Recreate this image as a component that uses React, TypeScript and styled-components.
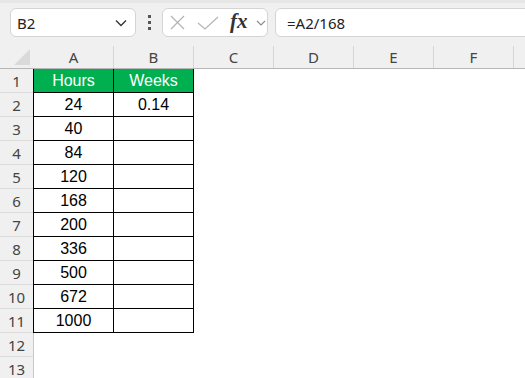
import styled, { createGlobalStyle } from "styled-components";

const GlobalStyle = createGlobalStyle`
  html, body {
    margin: 0;
    padding: 0;
    background: #ffffff;
    overflow: hidden;
  }
`;

const COLUMNS = ["A", "B", "C", "D", "E", "F", ""];
const HOURS = ["24", "40", "84", "120", "168", "200", "336", "500", "672", "1000"];
const ROW_COUNT = 13;

const App = () => {
  return (
    <Page>
      <GlobalStyle />
      <Toolbar>
        <NameBox>
          <span>B2</span>
          <svg width="12" height="8" viewBox="0 0 12 8">
            <path d="M1 1.5 L6 6.5 L11 1.5" fill="none" stroke="#333" strokeWidth="1.3" />
          </svg>
        </NameBox>
        <Dots>
          <i />
          <i />
          <i />
        </Dots>
        <FxGroup>
          <svg width="15" height="15" viewBox="0 0 15 15">
            <path d="M1 1 L14 14 M14 1 L1 14" stroke="#b4b4b4" strokeWidth="1.2" />
          </svg>
          <svg width="22" height="14" viewBox="0 0 22 14">
            <path d="M1 7 L8 13 L21 1" fill="none" stroke="#b4b4b4" strokeWidth="1.2" />
          </svg>
          <FxLabel>fx</FxLabel>
          <svg width="10" height="6" viewBox="0 0 10 6">
            <path d="M1 1 L5 5 L9 1" fill="none" stroke="#8a8a8a" strokeWidth="1.1" />
          </svg>
        </FxGroup>
        <FormulaBox>=A2/168</FormulaBox>
      </Toolbar>
      <Sheet>
        <HeaderRow>
          <Corner>
            <svg width="16" height="16" viewBox="0 0 16 16">
              <path d="M16 0 L16 16 L0 16 Z" fill="#dadada" />
            </svg>
          </Corner>
          {COLUMNS.map((c, i) => (
            <ColHeader key={i}>{c}</ColHeader>
          ))}
        </HeaderRow>
        {Array.from({ length: ROW_COUNT }, (_, i) => {
          const r = i + 1;
          const inTable = r <= 11;
          return (
            <Row key={r}>
              <RowHeader>{r}</RowHeader>
              {COLUMNS.map((_c, ci) => {
                const bordered = inTable && ci < 2;
                let text = "";
                if (r === 1) text = ci === 0 ? "Hours" : ci === 1 ? "Weeks" : "";
                else if (ci === 0 && inTable) text = HOURS[r - 2];
                else if (ci === 1 && r === 2) text = "0.14";
                return (
                  <Cell key={ci} $bordered={bordered} $first={ci === 0} $head={r === 1 && ci < 2}>
                    {text}
                  </Cell>
                );
              })}
            </Row>
          );
        })}
      </Sheet>
    </Page>
  );
};

const Page = styled.div`
  width: 525px;
  height: 378px;
  overflow: hidden;
  font-family: "Noto Sans", "Open Sans", sans-serif;
`;

const Toolbar = styled.div`
  height: 46px;
  box-sizing: border-box;
  display: flex;
  align-items: flex-start;
  padding-top: 8px;
  padding-left: 10px;
  background: linear-gradient(#e6e6e6 0, #e6e6e6 3px, #f0f0f0 3px);
`;

const Box = styled.div`
  height: 29px;
  box-sizing: border-box;
  background: #ffffff;
  border: 1px solid #d4d4d4;
  border-radius: 6px;
  display: flex;
  align-items: center;
`;

const NameBox = styled(Box)`
  width: 126px;
  padding: 0 8px 0 6px;
  justify-content: space-between;
  font-size: 15px;
  color: #222;
`;

const Dots = styled.div`
  width: 26px;
  height: 29px;
  display: flex;
  flex-direction: column;
  align-items: center;
  justify-content: center;
  gap: 3px;

  i {
    display: block;
    width: 3px;
    height: 3px;
    background: #555;
  }
`;

const FxGroup = styled(Box)`
  width: 106px;
  padding: 0 0 0 7px;

  svg:nth-child(2) {
    margin-left: 12px;
  }

  svg:last-child {
    margin-left: 8px;
  }
`;

const FxLabel = styled.span`
  font-family: "Liberation Serif", "DejaVu Serif", serif;
  font-style: italic;
  font-weight: bold;
  font-size: 21px;
  line-height: 1;
  color: #333;
  margin-left: 11px;
  margin-top: -2px;
`;

const FormulaBox = styled(Box)`
  margin-left: 7px;
  flex: 1;
  margin-right: -10px;
  padding-left: 11px;
  font-size: 15px;
  color: #222;
`;

const Sheet = styled.div`
  display: flex;
  flex-direction: column;
`;

const HeaderRow = styled.div`
  display: flex;
  height: 23px;
  box-sizing: border-box;
  background: #f0f0f0;
  border-bottom: 1px solid #b6b6b6;
`;

const Corner = styled.div`
  width: 34px;
  flex: none;
  display: flex;
  align-items: flex-end;
  justify-content: flex-end;
  padding: 0 4px 3px 0;
  box-sizing: border-box;
`;

const ColHeader = styled.div`
  width: 80px;
  flex: none;
  box-sizing: border-box;
  border-right: 1px solid #d6d6d6;
  text-align: center;
  font-size: 15px;
  line-height: 22px;
  color: #444;
`;

const Row = styled.div`
  display: flex;
  height: 24px;
`;

const RowHeader = styled.div`
  width: 34px;
  flex: none;
  box-sizing: border-box;
  background: #f0f0f0;
  border-right: 1px solid #c8c8c8;
  border-bottom: 1px solid #dcdcdc;
  text-align: center;
  font-size: 15px;
  line-height: 24px;
  color: #444;
`;

const Cell = styled.div<{ $bordered: boolean; $first: boolean; $head: boolean }>`
  flex: none;
  box-sizing: border-box;
  margin-left: ${(p) => (p.$bordered && p.$first ? "-1px" : "0")};
  width: ${(p) => (p.$bordered && p.$first ? "81px" : "80px")};
  border-left: ${(p) => (p.$bordered && p.$first ? "1px solid #000" : "none")};
  border-right: 1px solid ${(p) => (p.$bordered ? "#000" : "transparent")};
  border-bottom: 1px solid ${(p) => (p.$bordered ? "#000" : "transparent")};
  background: ${(p) => (p.$head ? "#00b050" : "#fff")};
  color: ${(p) => (p.$head ? "#fff" : "#000")};
  text-align: center;
  font-family: "Liberation Sans", Arial, sans-serif;
  font-size: 16px;
  line-height: 24px;
`;

export default App;
